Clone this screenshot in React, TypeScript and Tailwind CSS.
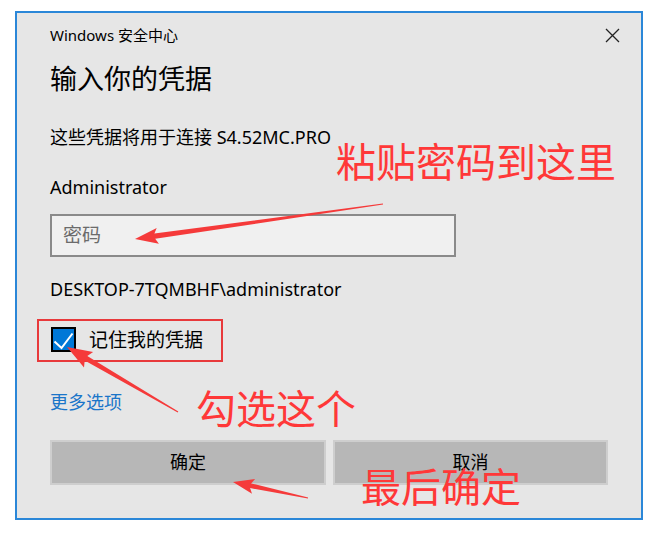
type Pt = [number, number]

// tapered annotation arrow, computed from tail and tip
const arrowPoints = (tail: Pt, tip: Pt, headLen: number, headHalf: number, shaftHalf: number) => {
  const dx = tip[0] - tail[0]
  const dy = tip[1] - tail[1]
  const len = Math.hypot(dx, dy)
  const ux = dx / len
  const uy = dy / len
  const nx = -uy
  const ny = ux
  const bx = tip[0] - ux * headLen
  const by = tip[1] - uy * headLen
  const pts: Pt[] = [
    [tail[0] + nx * 0.6, tail[1] + ny * 0.6],
    [bx + nx * shaftHalf, by + ny * shaftHalf],
    [bx - ux * 3 + nx * headHalf, by - uy * 3 + ny * headHalf],
    tip,
    [bx - ux * 3 - nx * headHalf, by - uy * 3 - ny * headHalf],
    [bx - nx * shaftHalf, by - ny * shaftHalf],
    [tail[0] - nx * 0.6, tail[1] - ny * 0.6],
  ]
  return pts.map((p) => p.map((v) => v.toFixed(1)).join(',')).join(' ')
}

const arrows = [
  { tail: [383, 204] as Pt, tip: [135, 239] as Pt, head: 20, half: 8, shaft: 2.6 },
  { tail: [178, 412] as Pt, tip: [67, 347] as Pt, head: 22, half: 9, shaft: 2.6 },
  { tail: [308, 498] as Pt, tip: [233, 482] as Pt, head: 18, half: 7.5, shaft: 2.4 },
]

const App = () => {
  return (
    <div className="relative w-[667px] h-[534px] bg-white overflow-hidden font-['Noto_Sans','Noto_Sans_CJK_SC',sans-serif] text-black">
      <div className="pt-[11px] pl-[15px]">
        <div className="w-[628px] h-[509px] bg-[#e6e6e6] border-2 border-[#2b87d8] pt-[12px] pl-[33px] pr-[32px]">
          <div className="flex items-center justify-between h-5">
            <span className="text-[15px] leading-5">Windows 安全中心</span>
            <svg width="15" height="15" viewBox="0 0 15 15" className="mr-[-11px]">
              <path d="M1 1 L14 14 M14 1 L1 14" stroke="#222" strokeWidth="1.3" fill="none" />
            </svg>
          </div>

          <h1 className="mt-4 text-[27px] leading-9 font-normal">输入你的凭据</h1>
          <p className="mt-7 text-[18px] leading-6">这些凭据将用于连接 S4.52MC.PRO</p>
          <p className="mt-[26px] text-[18px] leading-6">Administrator</p>

          <div className="mt-[15px] h-[43px] w-[406px] border-2 border-[#8a8a8a] bg-[#f0f0f0] flex items-center pl-[11px] text-[19px] text-[#6b6b6b]">
            密码
          </div>

          <p className="mt-5 text-[18px] leading-6">DESKTOP-7TQMBHF\administrator</p>

          <div className="relative mt-[26px] h-[25px] flex items-center gap-[13px]">
            <div className="ml-px w-[25px] h-[25px] border-2 border-black bg-[#0078d7] flex items-center justify-center">
              <svg width="21" height="21" viewBox="0 0 21 21">
                <polyline points="1.5,12.5 8.5,19 19.5,4.5" stroke="white" strokeWidth="2" fill="none" />
              </svg>
            </div>
            <span className="text-[19px] leading-6">记住我的凭据</span>
            <div className="absolute -left-[13px] -top-[8px] w-[186px] h-[43px] border-2 border-[#e8393b]" />
          </div>

          <p className="mt-[38px] text-[18px] leading-6 text-[#1a75c9]">更多选项</p>

          <div className="mt-[26px] flex gap-[7px]">
            <button className="w-[276px] h-[45px] bg-[#b7b7b7] border-2 border-[#cecece] text-[18px] text-black">确定</button>
            <button className="w-[275px] h-[45px] bg-[#b7b7b7] border-2 border-[#cecece] text-[18px] text-black">取消</button>
          </div>
        </div>
      </div>

      {/* red annotations laid over the dialog */}
      <span className="absolute left-[336px] top-[140px] text-[40px] leading-none text-[#ff3838] font-['Noto_Sans_CJK_SC',sans-serif]">
        粘贴密码到这里
      </span>
      <span className="absolute left-[196px] top-[387px] text-[40px] leading-none text-[#ff3838] font-['Noto_Sans_CJK_SC',sans-serif]">
        勾选这个
      </span>
      <span className="absolute left-[361px] top-[465px] text-[40px] leading-none text-[#ff3838] font-['Noto_Sans_CJK_SC',sans-serif]">
        最后确定
      </span>
      <svg className="absolute left-0 top-0 pointer-events-none" width="667" height="534">
        {arrows.map((a, i) => (
          <polygon key={i} points={arrowPoints(a.tail, a.tip, a.head, a.half, a.shaft)} fill="#f53a3a" />
        ))}
      </svg>
    </div>
  )
}

export default App
